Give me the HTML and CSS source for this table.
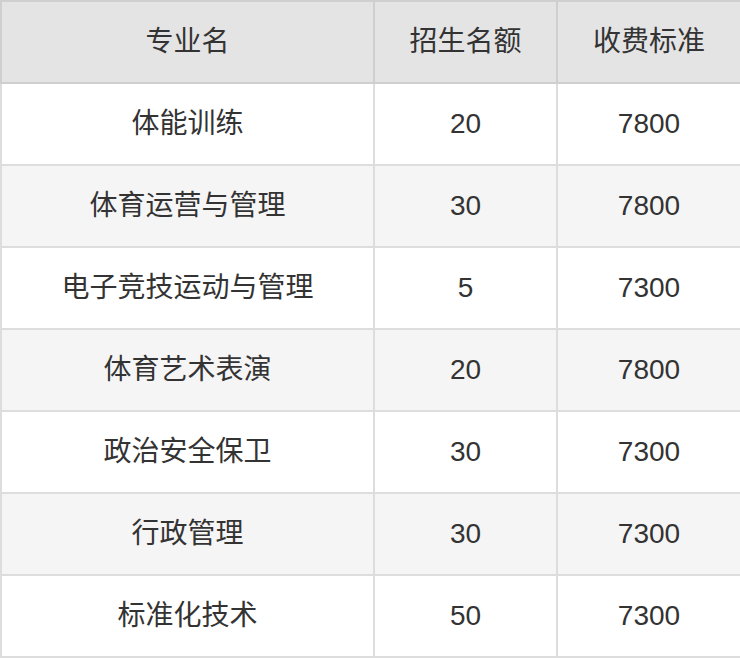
FILE: index.html
```html
<!DOCTYPE html>
<html lang="zh">
<head>
<meta charset="utf-8">
<link rel="stylesheet" href="styles.css">
</head>
<body>
<table class="fees">
  <colgroup>
    <col class="c1"><col class="c2"><col class="c3">
  </colgroup>
  <thead>
    <tr><th>专业名</th><th>招生名额</th><th>收费标准</th></tr>
  </thead>
  <tbody>
    <tr><td>体能训练</td><td>20</td><td>7800</td></tr>
    <tr><td>体育运营与管理</td><td>30</td><td>7800</td></tr>
    <tr><td>电子竞技运动与管理</td><td>5</td><td>7300</td></tr>
    <tr><td>体育艺术表演</td><td>20</td><td>7800</td></tr>
    <tr><td>政治安全保卫</td><td>30</td><td>7300</td></tr>
    <tr><td>行政管理</td><td>30</td><td>7300</td></tr>
    <tr><td>标准化技术</td><td>50</td><td>7300</td></tr>
  </tbody>
</table>
</body>
</html>
```

FILE: styles.css
```css
html, body {
  margin: 0;
  padding: 0;
  background: #ffffff;
}

.fees {
  border-collapse: collapse;
  width: 740px;
  table-layout: fixed;
  font-family: "Liberation Sans", "Noto Sans CJK SC", sans-serif;
  font-size: 28px;
  color: #333333;
}

.c1 { width: 373px; }
.c2 { width: 183px; }
.c3 { width: 184px; }

.fees th,
.fees td {
  border: 2px solid #dddddd;
  height: 82px;
  padding: 0;
  text-align: center;
  vertical-align: middle;
  box-sizing: border-box;
  line-height: 1.2;
}

.fees th {
  font-weight: normal;
  background: #e4e4e4;
  border-color: #cfcfcf;
}

.fees tbody tr:nth-child(even) td {
  background: #f5f5f5;
}
```
